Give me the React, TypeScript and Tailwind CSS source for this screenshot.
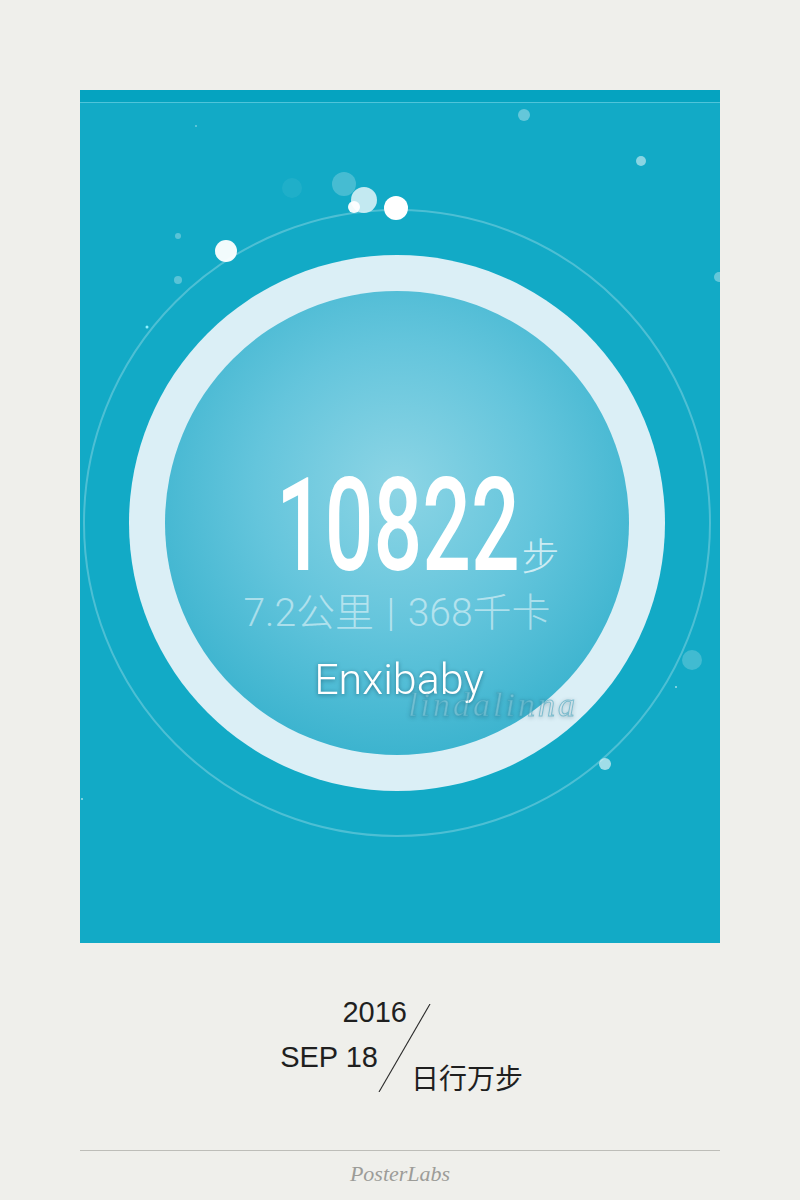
import type { ReactNode } from 'react';

const bubbles: Array<[number, number, number, string, number]> = [
  [444, 25, 6, '#ffffff', 0.35],
  [561, 71, 5, '#ffffff', 0.5],
  [212, 98, 10, '#ffffff', 0.06],
  [264, 94, 12, '#ffffff', 0.22],
  [284, 110, 13, '#d7eff5', 0.9],
  [274, 117, 6, '#ffffff', 0.95],
  [316, 118, 12, '#ffffff', 1],
  [146, 161, 11, '#ffffff', 0.95],
  [98, 146, 3, '#ffffff', 0.3],
  [98, 190, 4, '#ffffff', 0.3],
  [67, 237, 1.5, '#8ff0ff', 1],
  [116, 36, 1, '#ffffff', 0.4],
  [639, 187, 5, '#ffffff', 0.35],
  [612, 570, 10, '#ffffff', 0.2],
  [525, 674, 6, '#ffffff', 0.6],
  [596, 597, 1, '#ffffff', 0.6],
  [2, 709, 1, '#ffffff', 0.6]
];

function Bubbles() {
  return (
    <svg
      className="pointer-events-none absolute inset-0"
      width="640"
      height="853"
      viewBox="0 0 640 853"
    >
      {bubbles.map(([cx, cy, r, fill, opacity], i) => (
        <circle key={i} cx={cx} cy={cy} r={r} fill={fill} opacity={opacity} />
      ))}
    </svg>
  );
}

function Stat({ children }: { children: ReactNode }) {
  return (
    <div className="mt-[4px] h-[39px] whitespace-pre text-[39px] font-light leading-none text-white/50 [word-spacing:3px]">
      {children}
    </div>
  );
}

export default function App() {
  return (
    <div
      className="flex min-h-screen flex-col items-center bg-[#efefeb] pt-[90px]"
      style={{ fontFamily: 'Roboto, "Noto Sans CJK SC", sans-serif' }}
    >
      <section className="relative flex h-[853px] w-[640px] flex-col overflow-hidden bg-[#12aac6]">
        <div className="h-[13px] border-b border-[#4fc4da] bg-[#05a3c0]" />

        <div className="ml-[3px] mt-[106px] flex h-[628px] w-[628px] items-center justify-center rounded-full border-2 border-white/25">
          <div className="h-[536px] w-[536px] rounded-full bg-[#dbeff6] p-[36px]">
            <div className="flex h-full w-full flex-col items-center rounded-full bg-[radial-gradient(circle_at_50%_42%,#8dd5e5_0%,#64c5dc_40%,#3db4cf_75%,#31aecb_100%)] pt-[170px]">
              <div className="flex items-baseline pl-[42px] leading-none">
                <div className="h-[129px] w-[242px] whitespace-nowrap">
                  <span className="inline-block origin-left scale-x-[0.665] text-[129px] font-medium leading-none text-white">
                    10822
                  </span>
                </div>
                <span className="ml-[3px] text-[38px] font-light leading-none text-white/70">步</span>
              </div>

              <Stat>{'7.2公里 | 368千卡'}</Stat>

              <div className="relative ml-[4px] mt-[25px] text-[43px] font-light leading-none text-white drop-shadow-[0_1px_2px_rgba(0,40,60,0.45)]">
                Enxibaby
                <span
                  className="absolute left-[94px] top-[30px] whitespace-nowrap text-[34px] italic tracking-[3px] text-white/25 [-webkit-text-stroke:1px_rgba(60,160,185,0.55)]"
                  style={{ fontFamily: '"Liberation Serif", serif' }}
                >
                  lindalinna
                </span>
              </div>
            </div>
          </div>
        </div>

        <Bubbles />
      </section>

      <div
        className="ml-[3px] mt-[55px] flex items-start text-[#1f1f1f]"
        style={{ fontFamily: '"Liberation Sans", "Noto Sans CJK SC", sans-serif' }}
      >
        <div className="flex w-[127px] flex-col items-end text-[29px] leading-none">
          <div>2016</div>
          <div className="mr-[29px] mt-[16px]">SEP 18</div>
        </div>
        <svg className="-ml-[29px] mt-[6px]" width="54" height="88" viewBox="0 0 54 88">
          <line x1="52" y1="0" x2="1" y2="88" stroke="#2a2a2a" strokeWidth="1.1" />
        </svg>
        <div
          className="-ml-[21px] mt-[65px] text-[28px] leading-none"
          style={{ fontFamily: '"Noto Sans CJK SC", sans-serif' }}
        >
          日行万步
        </div>
      </div>

      <div className="mt-[58px] h-px w-[640px] bg-[#bdbdb8]" />

      <div
        className="mt-[12px] text-[22px] italic leading-none text-[#9c9c98]"
        style={{ fontFamily: '"Liberation Serif", serif' }}
      >
        PosterLabs
      </div>
    </div>
  );
}
